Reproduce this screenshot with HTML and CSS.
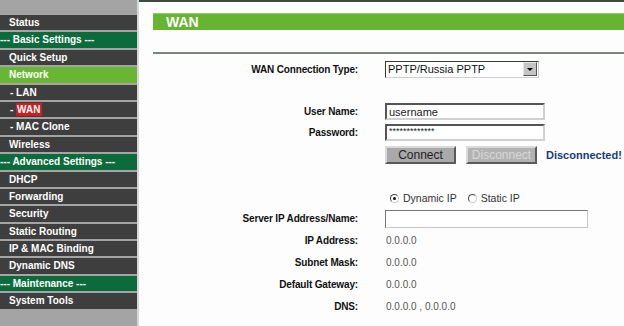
FILE: index.html
```html
<!DOCTYPE html>
<html>
<head>
    <title>WAN</title>
    <link rel="stylesheet" href="styles.css">
</head>
<body>
    <div class="page">
        <!-- Left menu -->
        <ul class="menu">
            <li class="item">Status</li>
            <li class="item section">--- Basic Settings ---</li>
            <li class="item">Quick Setup</li>
            <li class="item active">Network</li>
            <li class="item sub">- LAN</li>
            <li class="item sub">- <span class="current">WAN</span></li>
            <li class="item sub">- MAC Clone</li>
            <li class="item">Wireless</li>
            <li class="item section">--- Advanced Settings ---</li>
            <li class="item">DHCP</li>
            <li class="item">Forwarding</li>
            <li class="item">Security</li>
            <li class="item">Static Routing</li>
            <li class="item">IP &amp; MAC Binding</li>
            <li class="item">Dynamic DNS</li>
            <li class="item section">--- Maintenance ---</li>
            <li class="item">System Tools</li>
        </ul>

        <!-- Main panel -->
        <div class="main">
            <div class="title-bar">WAN</div>
            <div class="rule"></div>

            <div class="row row-type">
                <div class="label">WAN Connection Type:</div>
                <div class="field">
                    <div class="select">
                        <span class="select-text">PPTP/Russia PPTP</span>
                        <span class="select-btn"><span class="arrow"></span></span>
                    </div>
                </div>
            </div>

            <div class="row row-user">
                <div class="label">User Name:</div>
                <div class="field"><input class="text-input" type="text" value="username"></div>
            </div>
            <div class="row">
                <div class="label">Password:</div>
                <div class="field"><input class="text-input pass" type="text" value="*************"></div>
            </div>
            <div class="row row-buttons">
                <div class="label"></div>
                <div class="field">
                    <button class="btn">Connect</button>
                    <button class="btn disabled">Disconnect</button>
                    <span class="state">Disconnected!</span>
                </div>
            </div>

            <div class="row row-radio">
                <div class="label"></div>
                <div class="field">
                    <span class="radio checked"></span><span class="radio-label">Dynamic IP</span>
                    <span class="radio static"></span><span class="radio-label">Static IP</span>
                </div>
            </div>
            <div class="row row-server">
                <div class="label">Server IP Address/Name:</div>
                <div class="field"><input class="text-input wide" type="text" value=""></div>
            </div>

            <div class="row row-value">
                <div class="label">IP Address:</div>
                <div class="field value">0.0.0.0</div>
            </div>
            <div class="row row-value">
                <div class="label">Subnet Mask:</div>
                <div class="field value">0.0.0.0</div>
            </div>
            <div class="row row-value">
                <div class="label">Default Gateway:</div>
                <div class="field value">0.0.0.0</div>
            </div>
            <div class="row row-value">
                <div class="label">DNS:</div>
                <div class="field value">0.0.0.0 , 0.0.0.0</div>
            </div>
        </div>
    </div>
</body>
</html>
```

FILE: styles.css
```css
* {
    margin: 0px;
    padding: 0px;
    box-sizing: border-box;
    font-family: 'Liberation Sans', Arial, sans-serif;
}

html, body {
    width: 624px;
    height: 326px;
    overflow: hidden;
    background-color: #fdfdfd;
}

.page {
    display: flex;
    height: 326px;
}

/* Left menu */
.menu {
    list-style: none;
    width: 139px;
    flex-shrink: 0;
    height: 326px;
    background-color: #a4a4a4;
    border-right: 2px solid #d6d6d6;
    padding-top: 15px;
}

.item {
    height: 15.4px;
    margin-bottom: 2px;
    background-color: #3e3e3e;
    color: #ffffff;
    font-size: 10px;
    font-weight: bold;
    line-height: 15.4px;
    padding-left: 9px;
    white-space: nowrap;
}

.item.section {
    background-color: #0b6b3b;
    padding-left: 0px;
}

.item.active {
    background-color: #68b631;
}

.item.sub {
    padding-left: 10px;
}

.current {
    background-color: #cf1c1c;
    padding: 1px 2px 1px 1px;
}

/* Main panel */
.main {
    flex: 1;
    border-top: 2px solid #3d4a42;
    padding-left: 14px;
}

.title-bar {
    margin-top: 11px;
    height: 17px;
    background-color: #66b432;
    border-top: 1px solid #8fcc64;
    color: #ffffff;
    font-size: 14px;
    font-weight: bold;
    line-height: 16px;
    padding-left: 13px;
}

.rule {
    margin-top: 22px;
    height: 2px;
    background-color: #7b877e;
}

.row {
    display: grid;
    grid-template-columns: 205px 1fr;
    column-gap: 27px;
    height: 21px;
    align-items: center;
}

.row-type {
    margin-top: 4px;
    height: 22px;
}

.row-user {
    margin-top: 21px;
}

.row-buttons {
    margin-top: 1px;
    height: 22px;
}

.row-radio {
    margin-top: 22px;
    height: 20px;
}

.row-value {
    height: 22px;
}

.label {
    text-align: right;
    font-size: 10px;
    font-weight: bold;
    color: #111111;
    letter-spacing: -0.15px;
    white-space: nowrap;
}

.field {
    display: flex;
    align-items: center;
    font-size: 11px;
}

.value {
    font-size: 10px;
    color: #555555;
    padding-left: 1px;
}

/* Fake select box */
.select {
    width: 154px;
    height: 17px;
    display: flex;
    align-items: center;
    background-color: #ffffff;
    border: 1px solid #3a3a3a;
    border-right-color: #cfcfcf;
    border-bottom-color: #cfcfcf;
}

.select-text {
    flex: 1;
    font-size: 11px;
    padding-left: 2px;
    color: #111111;
}

.select-btn {
    width: 14px;
    height: 14px;
    margin-right: 1px;
    background-color: #c4c4c4;
    border: 1px solid #e8e8e8;
    border-right-color: #555555;
    border-bottom-color: #555555;
    display: flex;
    align-items: center;
    justify-content: center;
}

.arrow {
    width: 0px;
    height: 0px;
    border-left: 3px solid transparent;
    border-right: 3px solid transparent;
    border-top: 3px solid #000000;
}

.text-input {
    width: 160px;
    height: 17px;
    border: 2px solid #555555;
    border-right-color: #d0d0d0;
    border-bottom-color: #d0d0d0;
    background-color: #ffffff;
    font-size: 11px;
    padding-left: 2px;
    color: #222222;
    outline: none;
}

.text-input.pass {
    font-size: 9px;
    line-height: 9px;
    padding-bottom: 3px;
}

.text-input.wide {
    width: 203px;
    height: 18px;
    border-width: 1px;
    border-color: #777777;
    border-right-color: #c8c8c8;
    border-bottom-color: #c8c8c8;
}

.btn {
    width: 71px;
    height: 18px;
    background-color: #a9a9a9;
    border: 2px solid #d9d9d9;
    border-right-color: #5a5a5a;
    border-bottom-color: #5a5a5a;
    font-size: 12px;
    color: #1e1e1e;
    margin-right: 10px;
}

.btn.disabled {
    background-color: #b3b3b3;
    color: #d8d8d8;
    margin-right: 9px;
}

.state {
    font-size: 11px;
    font-weight: bold;
    color: #173c7a;
}

/* Radio buttons */
.radio {
    width: 9px;
    height: 9px;
    border-radius: 50%;
    border: 1px solid #444444;
    border-right-color: #cccccc;
    border-bottom-color: #cccccc;
    background-color: #ffffff;
    margin-left: 5px;
    margin-right: 4px;
    display: flex;
    align-items: center;
    justify-content: center;
}

.radio.checked::after {
    content: "";
    width: 3px;
    height: 3px;
    border-radius: 50%;
    background-color: #111111;
}

.radio.static {
    margin-left: 11px;
}

.radio-label {
    font-size: 10.5px;
    color: #333333;
}
```
